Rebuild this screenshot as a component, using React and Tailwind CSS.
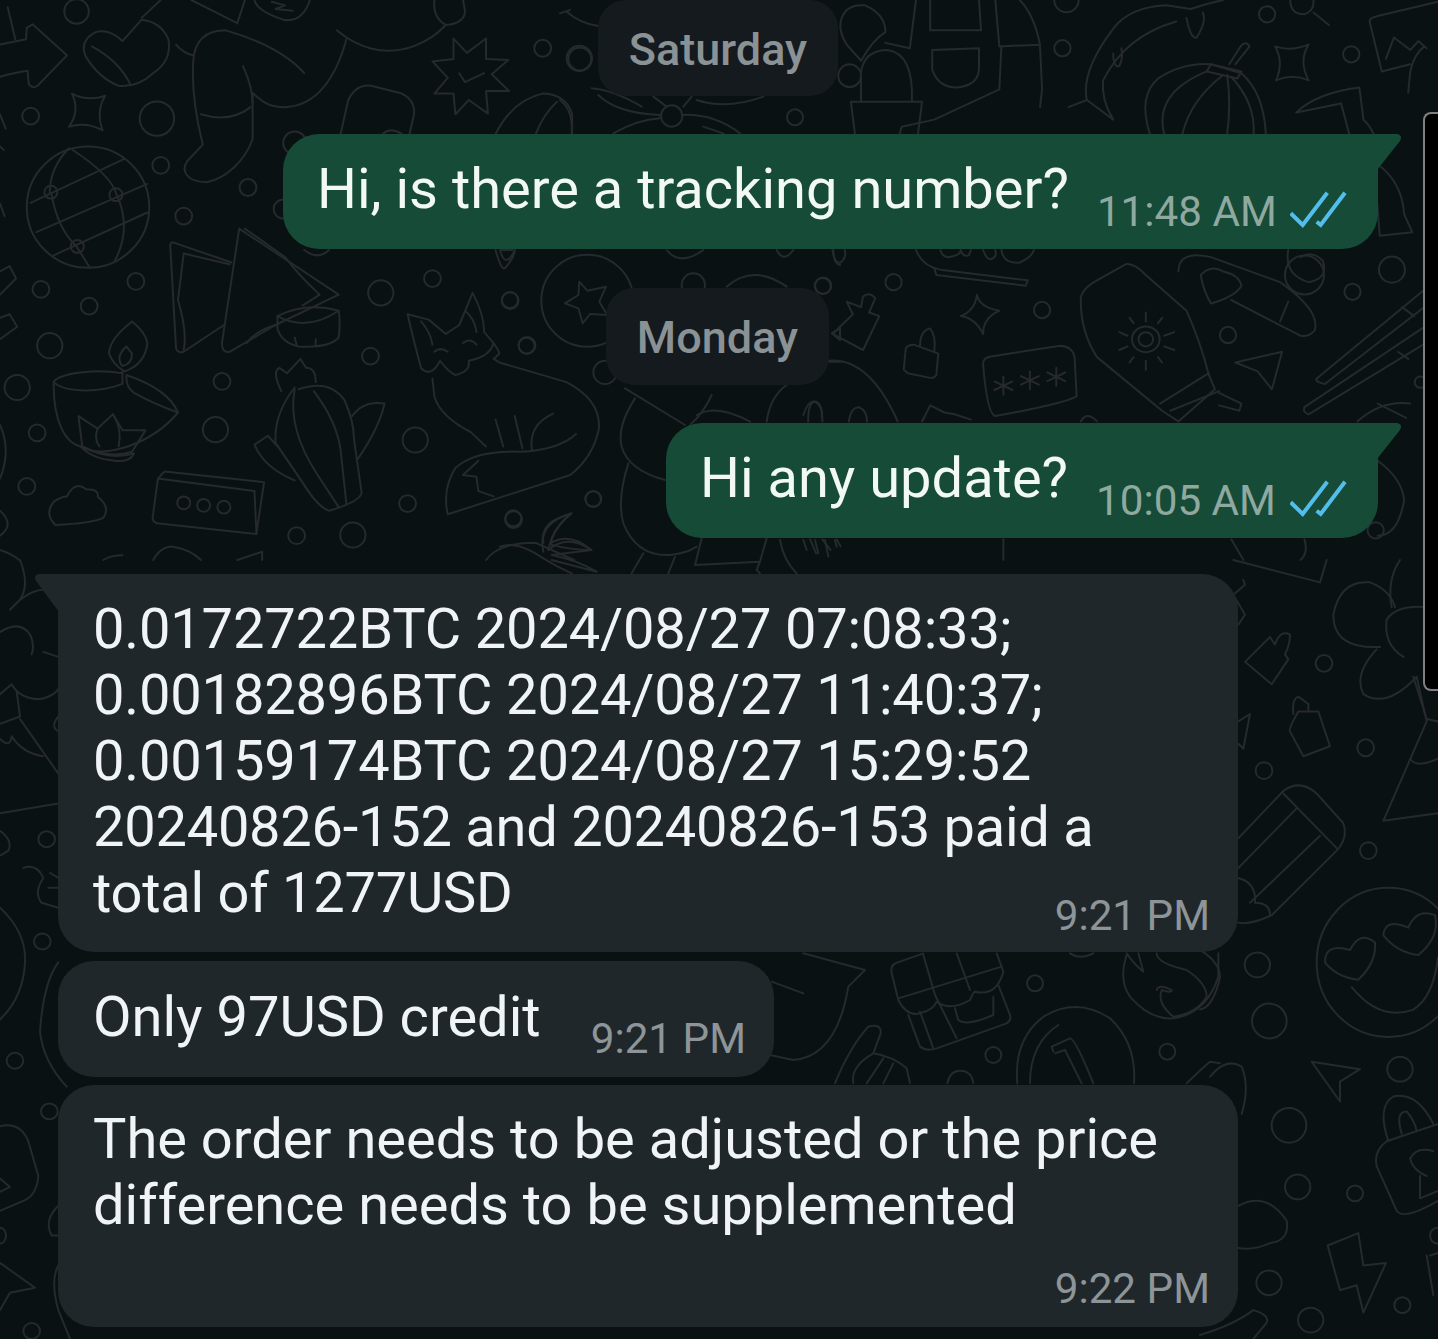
import React from "react";

const E = (cx, cy, rx, ry) => `M${cx - rx} ${cy}a${rx} ${ry} 0 1 0 ${2 * rx} 0a${rx} ${ry} 0 1 0 ${-2 * rx} 0Z`;
const R = (list, rx, ry) => list.map(([x, y, r]) => E(x, y, r * rx, r * ry));

const g3 = [
  "M0 215 C30 205 60 200 72 198 L75 235 Q85 250 98 240 L175 155 L85 68 L70 78 L68 110 L0 125", "M20 20 L40 110",
  "M320 115 L370 55 Q420 60 440 110 Q450 170 400 205 Q360 245 310 240 Q260 220 225 160 Q205 115 250 90 Q285 80 320 115", "M240 130 Q310 170 340 235",
  "M905 110 C880 210 830 300 740 300 C700 300 680 280 660 260 L660 390 C640 450 590 500 540 510 C490 510 470 480 490 450 L530 405 C510 320 500 250 505 170 C510 100 550 85 590 85 C670 110 750 150 795 205",
  "M635 185 C650 220 660 260 660 290", "M525 320 Q600 345 655 300",
  "M880 85 C930 130 1000 160 1080 130 Q1130 110 1165 70 Q1215 65 1215 30 L1210 0", "M1135 0 Q1130 50 1165 70",
  "M460 125 Q480 150 505 155", "M370 50 L420 0", "M500 0 L620 65 L640 0", "M665 0 Q670 30 740 55 Q790 65 810 0", "M710 5 L745 15 L720 25 L765 30",
  "M1185 108 L1220 148 L1270 108 L1270 165 L1328 168 L1285 208 L1330 255 L1270 255 L1275 318 L1225 280 L1190 320 L1185 262 L1135 262 L1170 218 L1130 172 L1185 165 Z", "M1200 205 L1215 230 L1265 205",
  "M188 262 Q230 285 275 268 Q250 310 268 365 Q225 340 180 355 Q210 310 188 262 Z",
  "M890 375 L910 280 Q930 235 970 240 L1050 262 Q1085 280 1082 320 L1070 375", "M1000 375 Q1020 355 1050 375", "M1295 375 Q1340 280 1420 262 Q1480 265 1495 320 L1495 375", "M1400 375 Q1420 320 1455 285",
  E(230, 580, 160, 170), "M80 568 L325 445", "M95 650 L385 515", "M140 715 L385 595", "M130 540 Q130 470 180 415", "M190 420 Q290 490 305 545 Q345 640 300 730", "M135 545 Q150 640 200 690 L235 750",
  E(133, 538, 17, 18), E(303, 545, 17, 18), E(202, 690, 17, 18),
  "M625 640 L580 960 Q580 990 600 985 L720 910 L885 825 L625 640 Z", "M605 735 L450 678 Q445 680 445 690 L460 975 Q465 990 480 985 L585 910", "M480 710 L465 840 Q490 930 480 980", "M480 710 L600 740", "M640 640 L745 720 Q780 770 835 825 Q800 850 790 855",
  "M725 885 Q800 845 885 870 Q890 905 885 945 Q860 975 780 970 Q735 960 725 920 Z", "M725 885 Q800 930 885 870", "M720 910 Q670 925 645 960", "M770 945 L775 965 M825 950 L825 968",
  "M345 900 Q285 950 285 990 Q295 1020 325 1040 Q380 1020 385 960 Q380 930 345 900 Z", "M330 970 Q300 1000 320 1025 Q345 1020 345 990 Z", "M320 1040 L320 1075 C260 1100 170 1100 140 1070 C150 1050 230 1030 320 1045", "M140 1075 C140 1180 170 1240 210 1250 C270 1290 400 1240 465 1155 Q400 1130 350 1100 Q330 1085 330 1055", "M330 1050 Q440 1090 465 1155",
  "M205 1165 L255 1200 L295 1160 L320 1205 L380 1205 L345 1265 Q280 1285 215 1250 Z", "M255 1200 Q245 1230 260 1250", "M295 1160 Q320 1200 310 1250", "M215 1250 Q280 1290 350 1270 Q340 1295 300 1290 Q240 1285 210 1250",
  "M145 1470 Q115 1440 140 1405 Q160 1390 175 1390 Q195 1345 225 1370 Q260 1370 255 1390 Q290 1420 270 1450 Q240 1465 145 1470",
  "M430 1320 L690 1350 L670 1495 L410 1465 Q395 1460 400 1440 L412 1345 Q415 1335 430 1320", "M412 1340 L665 1375 L670 1495", E(480, 1408, 17, 18), E(532, 1415, 17, 18), E(585, 1420, 17, 18),
  "M780 1090 Q860 1060 900 1120 Q925 1180 925 1230 L945 1380 Q940 1405 860 1430 Q830 1420 790 1350 L720 1240 Q715 1160 770 1085", "M770 1090 Q750 1200 830 1330 L885 1420", "M820 1095 Q880 1180 890 1260 L905 1410", "M920 1165 Q950 1120 1005 1130 Q990 1200 935 1285", "M770 1345 Q690 1310 665 1245 L700 1220 L725 1250", "M735 1095 Q710 1040 730 1030 L750 1045 L785 1005 L800 1030 Q825 1030 825 1070",
  "M1130 1060 L1135 1110 Q1150 1165 1230 1210 L1270 1250", "M1100 1030 Q1080 950 1065 880 L1120 895 L1165 935 L1200 910 L1235 820 Q1265 880 1265 930 Q1300 970 1305 990 L1290 1005 L1305 1015 L1480 1070 Q1570 1120 1565 1200 Q1550 1280 1490 1330 L1170 1440 Q1155 1370 1190 1310 Q1240 1260 1360 1265 Q1460 1260 1505 1215",
  "M1295 1175 L1315 1250", "M1345 1165 L1365 1255", "M1445 1158 Q1380 1190 1390 1260", "M1100 1030 Q1125 1060 1150 1010 Q1170 1040 1190 1050 Q1230 1040 1225 1010 Q1280 1000 1290 960", "M1250 1290 L1210 1330 L1245 1335 L1250 1375 L1290 1390",
  "M1135 985 Q1150 970 1170 985", "M1210 960 Q1230 945 1245 965", "M1100 900 Q1125 930 1130 965", "M1215 870 Q1240 890 1245 930",
  "M1270 1568 Q1300 1520 1400 1520 L1500 1568", "M1420 1520 Q1410 1460 1490 1440 Q1440 1490 1440 1520 Q1490 1490 1545 1540 Q1490 1540 1440 1525", "M400 1568 Q420 1530 450 1530 Q500 1540 525 1568", "M620 1568 L685 1545 L685 1568", "M270 1568 Q290 1555 320 1555",
  "M0 760 L25 745 L42 780 L0 825", "M0 890 L25 880 L45 915 L0 950", "M0 1190 Q30 1260 0 1340", "M0 1430 Q40 1470 0 1500", "M0 1540 Q30 1550 50 1568", "M0 320 L15 360 M0 410 L10 420 M0 570 L12 605",
  "M1295 700 Q1310 760 1320 750 Q1345 720 1345 700", "M795 700 Q830 730 860 700", "M1310 700 L1340 700",
  ...R([[1418, 135, 22], [1515, 165, 30], [80, 325, 22], [410, 332, 45], [420, 463, 22], [648, 525, 22], [480, 605, 22], [107, 810, 22], [355, 788, 22], [233, 857, 22], [130, 968, 33], [45, 1085, 33], [580, 1068, 22], [97, 1212, 22], [563, 1203, 33], [70, 1362, 22], [995, 820, 33], [1130, 780, 22], [1333, 842, 22], [968, 997, 22], [1377, 967, 22], [1085, 1232, 33], [1065, 1410, 22], [775, 1500, 22], [922, 1498, 33], [1342, 1455, 22], [1550, 1397, 20], [770, 400, 30], [740, 585, 25], [200, 32, 32]], 1, 1.07),
];

const g4 = [
  "M125 285 L300 285 L290 375", "M125 285 L135 375", "M150 285 L150 200 Q160 140 215 140 Q280 150 275 285", "M100 60 Q110 10 160 15 Q210 40 210 90 Q180 110 150 170 L115 125 Q95 90 100 60",
  "M285 0 L270 135 L210 120", "M480 0 L490 130 L590 125 Q575 40 540 0", "M320 0 L320 85 L445 85 L440 0", "M325 140 L325 195 Q340 245 385 245 Q440 240 440 190 L440 135 Z", "M495 130 L490 250 L330 335 L250 355 L245 375", "M590 130 L595 250 L590 300",
  "M660 300 L705 280 L770 335 Q740 280 745 225 Q800 100 925 60", "M705 280 Q690 200 770 80 Q810 20 900 15 L960 25 Q1000 10 1040 0", "M950 50 Q960 110 975 105 Q1000 60 990 35", "M770 150 Q770 190 785 185 Q795 160 790 135",
  "M860 375 Q830 270 880 220 Q940 175 1010 180 L1085 205 Q1140 260 1145 375", "M1010 180 L1085 200 L1075 220 L1000 200 Z", "M1055 180 L1080 135 Q1095 110 1105 130 L1070 180", "M895 375 Q870 260 1000 200", "M940 375 Q960 280 1040 210", "M1050 210 Q1060 290 1050 375", "M1060 215 Q1120 290 1115 375",
  "M1168 130 Q1205 145 1250 125 Q1225 170 1250 225 Q1210 205 1170 225 Q1190 175 1168 130 Z", "M1205 0 Q1205 40 1240 40 Q1265 30 1262 0", "M1262 35 L1300 70",
  "M1400 60 Q1400 50 1420 45 L1568 5", "M1400 60 L1430 200 L1500 180", "M1440 165 L1460 105 L1500 140 L1520 115 L1540 135", "M1220 315 Q1270 260 1375 245 L1385 335 Q1400 350 1410 375", "M1220 315 L1330 290 L1350 375", "M1495 260 L1500 200 Q1510 150 1535 130",
  "M80 700 Q85 740 100 735 Q115 720 110 700", "M285 700 Q300 745 345 755 L560 785 L555 800 L335 770 L330 750", "M345 700 Q350 720 365 720 Q395 715 395 700 Q400 720 415 715 Q420 700 420 700", "M450 700 Q460 730 470 725 Q485 720 480 700", "M495 700 Q500 740 540 735 Q570 720 575 700",
  "M115 845 L150 860 L155 830 Q170 815 185 835 L170 875 L195 885 L155 980 L80 935 L130 880 Z", "M435 825 Q440 860 490 870 Q450 890 450 935 Q430 890 395 885 Q430 870 435 825 Z",
  "M255 1035 L260 975 Q265 965 280 965 L340 990 L335 1050 Q330 1060 320 1058 L265 1045 Z", "M295 970 Q295 925 320 920 Q335 940 330 985",
  "M450 1020 Q450 1000 470 998 L640 968 Q670 970 675 1000 L680 1110 Q650 1130 480 1165 Q460 1160 450 1020",
  "M500 1055 L500 1105 M478 1068 L522 1092 M478 1092 L522 1068", "M565 1040 L565 1090 M543 1053 L587 1077 M543 1077 L587 1053", "M630 1030 L630 1080 M608 1043 L652 1067 M608 1067 L652 1043",
  "M690 840 Q690 810 730 785 L800 740 Q820 735 850 770 L950 870 Q985 960 1005 1050 L1020 1090 L930 1180 L890 1150 L730 1000 Q690 930 690 840", "M885 1130 L1005 1045", "M910 1150 L1030 1095", "M1030 1100 L1085 1130 L1080 1150 L1030 1135",
  E(850, 950, 34, 36), E(850, 950, 18, 20), "M850 875 L850 900 M850 1010 L850 1035 M785 930 L805 940 M895 940 L920 930 M785 980 L805 970 M895 970 L920 980 M810 890 L820 905 M880 905 L890 890 M810 1015 L820 1000 M880 1000 L890 1015",
  "M1070 1015 L1185 985 L1160 1090 L1125 1040 Z", "M930 760 Q930 700 1010 720 L1180 790 Q1280 870 1265 925 Q1250 945 1230 940 L1060 840", "M985 770 Q1010 740 1040 760 Q1080 770 1085 800 Q1070 830 1010 850 Q990 810 985 770Z", "M1200 700 Q1190 770 1250 790 Q1300 780 1285 730 Q1260 700 1230 720", "M1180 900 L1200 845",
  "M1270 1060 L1568 780", "M1290 1075 L1568 830", "M1240 1140 L1568 890", "M1250 1160 L1568 940", "M1270 1060 Q1265 1070 1290 1075", "M1240 1140 Q1235 1155 1250 1160", "M1480 860 L1510 885", "M1470 985 L1495 1005",
  "M1370 1180 Q1430 1120 1500 1130", "M300 1180 L320 1135 L355 1155 L380 1160 L420 1175", "M70 1010 Q170 1000 240 1180", "M20 1180 Q20 1120 40 1125 Q55 1130 55 1180", "M120 1180 Q125 1140 145 1140 Q165 1150 165 1180", "M690 1180 Q705 1150 730 1180",
  "M25 1510 L40 1550 M55 1510 L75 1540 M90 1510 L100 1530", "M1420 460 Q1480 510 1485 600 L1505 650 L1425 660 L1415 510", "M1420 1290 Q1480 1340 1485 1400 Q1470 1500 1420 1500", "M1420 1130 L1490 1170", "M1060 1510 L1090 1568", "M1240 1510 Q1250 1550 1230 1568", "M500 1510 L500 1568",
  ...R([[645, 135, 20], [1148, 40, 20], [1355, 152, 20], [122, 212, 28], [57, 800, 20], [230, 790, 20], [595, 868, 20], [1052, 938, 20], [1358, 817, 20], [1455, 755, 32], [1240, 770, 48], [1415, 1485, 20], [1525, 1070, 14], [655, 0, 30]], 1, 1.14),
];

const g8 = [
  E(262, 182, 138, 138), "M238 125 L262 152 L318 140 L298 185 L322 225 L270 222 L248 250 L235 205 L195 190 L235 165 Z",
  ...R([[30, 180, 24], [80, 317, 24], [315, 397, 35], [968, 138, 24], [280, 777, 24], [40, 835, 24], [580, 135, 35]], 1, 1),
  "M680 140 Q760 70 860 140", "M500 30 Q540 80 610 30", "M830 30 Q850 70 880 30", "M0 30 Q15 90 45 30", "M1000 30 Q1000 70 1020 75",
  "M375 445 L555 555", "M405 475 Q350 560 365 620 Q385 690 495 720", "M385 670 Q350 780 370 850 Q410 950 510 945 Q560 940 590 920", "M605 895 L585 975 L780 965 L770 990 L780 1000", "M800 895 L780 965", "M635 465 Q610 520 570 555", "M590 525 Q650 490 750 545", "M800 545 Q810 470 860 435", "M910 525 Q925 480 945 485 Q970 500 965 530", "M985 365 L1020 365", "M995 280 L1020 265 L1020 300Z",
  "M0 920 Q50 900 130 955 Q170 980 215 1000", "M130 935 Q110 850 215 820 Q160 860 145 930", "M145 930 Q200 880 275 930 L155 945 Q230 960 290 995 L155 960", "M430 940 L395 1000", "M525 950 L505 1000", "M910 900 L920 930 M945 900 L955 940 M975 900 L985 950 M1005 900 L1010 920", "M840 900 Q850 960 890 1000",
];

const g9 = [
  E(58, 175, 38, 38), "M0 40 L30 30", "M20 35 Q60 70 115 78", "M0 300 Q40 330 35 400", E(705, 352, 24, 24), E(335, 348, 32, 32), "M95 265 Q160 270 245 320", "M115 285 Q170 340 300 345", "M160 400 Q230 360 300 355", "M370 320 L395 290", "M410 300 Q500 330 610 290", "M365 345 Q460 340 540 400", "M430 380 L490 400", "M280 290 L320 320",
];

const g5 = [
  "M575 95 Q560 40 600 0", "M540 175 Q400 180 400 110 Q420 40 510 45 Q570 60 585 95", "M610 195 Q550 170 560 120 Q590 90 680 95", "M530 180 Q460 230 490 270 Q560 300 650 235 L680 325 L550 525 L714 510", "M640 235 L680 320 L714 325", "M630 400 Q650 420 714 400",
  "M135 205 L210 155 L225 170 Q240 140 270 150 Q270 170 255 190 L265 200 L215 250 Z",
  E(372, 208, 25, 17), E(497, 378, 25, 17), E(192, 424, 25, 17), E(505, 585, 25, 17), E(172, 815, 38, 25), E(208, 928, 52, 35), E(600, 1025, 38, 25), E(267, 1138, 52, 35), E(293, 1262, 38, 25), E(465, 1275, 24, 16), E(207, 1455, 38, 25), E(607, 1500, 24, 16), E(332, 1530, 38, 25),
  "M295 305 Q265 340 270 345 L310 395 L390 375 L355 305 Z", "M280 310 Q275 280 295 275 L325 290 L325 305", "M115 325 L150 310 L130 380 L115 370",
  "M115 560 L250 465 Q300 440 350 470 L430 530 Q445 560 410 585 L215 715 Q150 735 115 730", "M115 620 L290 500", "M250 470 L410 580", "M150 690 L360 555", "M115 640 Q170 650 165 690 Q210 690 210 715",
  E(565, 810, 215, 150), "M450 785 Q480 745 525 770 Q530 810 475 845 Q410 840 375 810 Q375 770 450 785 Z", "M625 740 Q650 700 705 715 Q720 760 655 795 Q590 790 550 755 Q555 720 625 740Z", "M455 860 Q540 930 640 905 Q700 880 714 800",
  "M335 1010 L480 1025 L420 1050 L420 1090 Z",
  "M530 1220 Q520 1190 560 1170 L714 1135", "M530 1220 L590 1310 Q610 1330 714 1290", "M565 1170 Q530 1100 580 1080 Q650 1070 700 1135", "M605 1155 Q585 1110 620 1110 Q645 1130 650 1150", "M680 1240 Q640 1230 630 1205 Q650 1180 700 1190", "M660 1240 L660 1285 L714 1270",
  "M383 1380 L475 1355 L490 1420 L558 1415 L490 1515 L470 1460 L420 1470 Z", "M0 1560 Q100 1540 160 1510 Q210 1520 200 1535 L160 1568",
  "M30 1040 Q80 1000 125 1020 Q150 1060 125 1115", "M0 785 Q60 810 60 840 Q40 900 0 905", "M100 0 L360 45 L380 0", "M130 40 L135 50 L100 70 L135 110 L115 130", "M690 1400 L714 1395", "M680 1400 L700 1480", "M115 1300 Q200 1270 260 1330 Q270 1370 210 1375 Q160 1390 115 1385", E(712, 1360, 22, 16),
];

const g7 = [
  "M60 0 Q90 50 60 80 L30 100", "M60 80 Q100 60 130 60", "M0 145 Q60 120 90 150 Q105 170 95 190", "M130 185 L175 195", "M0 270 L35 250 Q60 280 120 280 Q160 275 175 260", "M50 265 L60 315 L0 330", "M60 320 L175 430", "M0 360 Q30 380 35 355 Q70 390 130 395", "M0 510 L175 490", "M0 545 Q40 565 25 585 L0 595", E(140, 562, 25, 16),
  "M70 620 Q110 610 130 640 Q100 670 125 690 L175 700", "M150 630 L175 640", "M145 660 L175 660", E(127, 768, 25, 16), "M0 700 Q80 750 75 810 Q70 880 0 925", "M175 810 Q130 850 120 950 Q130 1010 200 1060", E(45, 1008, 25, 16), E(148, 1110, 25, 16),
  "M0 1140 Q60 1130 85 1170 L115 1240 Q110 1280 70 1290 L0 1310", "M0 1245 L30 1262 L0 1272", E(0, 1360, 18, 16), "M0 1415 L105 1465 L30 1475 L0 1510", E(95, 1552, 25, 16), "M175 1300 Q130 1330 155 1360 L175 1360", "M175 1420 Q150 1450 175 1510 L210 1568", "M175 315 Q150 335 175 345",
];

const g6 = [
  "M130 40 L315 90 L265 140 Q230 350 100 360 L30 345", "M35 125 L130 160",
  "M490 40 L405 70 Q390 80 395 100 L415 180 Q440 230 480 220 Q520 210 530 185 Q570 215 630 180 Q640 155 645 155 Q710 170 730 95 L710 40", "M415 175 L725 80", "M490 45 L525 165 L590 295", "M590 40 L630 150", "M445 225 L480 320 Q500 335 530 325 L740 250 Q755 240 750 225 L715 135", "M480 215 L520 325", "M585 205 L595 240 Q620 260 700 225 L700 170",
  "M225 430 Q270 320 325 260 Q365 250 362 280 L340 340 Q400 350 440 385 L450 430", "M280 430 Q270 380 340 340", "M320 430 L370 355", "M370 430 L400 370",
  E(825, 130, 24, 24), E(700, 345, 24, 24), E(1222, 335, 24, 24), "M562 430 Q570 392 600 392 Q635 392 640 430",
  "M772 430 Q760 300 850 230 Q950 170 1050 235 Q1130 310 1122 430", "M810 430 Q810 310 895 255", "M880 335 L875 320 L930 295 Q945 295 1000 430", "M885 340 L915 330 L965 430",
  "M1100 45 Q1075 120 1110 170 Q1170 240 1240 235 Q1340 220 1375 110 L1375 40", "M1100 40 Q1120 70 1150 95 L1135 40", "M1190 40 Q1190 70 1280 90 Q1340 130 1340 170 Q1310 220 1240 230 Q1190 190 1205 150 Q1235 160 1235 150 Q1195 130 1190 150", "M930 40 Q960 60 1000 40", "M1280 430 Q1320 390 1350 365 L1380 370",
];

const Group = ({ d, tx = 0, ty = 0, sx, sy }) => (
  <g transform={`translate(${tx} ${ty}) scale(${sx} ${sy})`}>
    {d.map((p, i) => (
      <path key={i} d={p} vectorEffect="non-scaling-stroke" />
    ))}
  </g>
);

const Doodles = () => (
  <svg className="absolute inset-0 h-[1339px] w-[1438px]" viewBox="0 0 1438 1339" fill="none" stroke="#26292d" strokeWidth="2" strokeLinecap="round" strokeLinejoin="round">
    <Group d={g3} sx={1 / 2.613} sy={1 / 2.8} />
    <Group d={g4} tx={800} sx={1 / 2.458} sy={1 / 2.8} />
    <Group d={g8} tx={500} ty={240} sx={1 / 3} sy={1 / 3} />
    <Group d={g9} tx={560} sx={1 / 3} sy={1 / 3} />
    <Group d={g5} tx={1200} ty={560} sx={1 / 3} sy={1 / 2.013} />
    <Group d={g7} ty={560} sx={1 / 3} sy={1 / 2.013} />
    <Group d={g6} tx={760} ty={940} sx={1 / 3} sy={1 / 3} />
  </svg>
);

const Ticks = () => (
  <svg className="mb-[21px] ml-auto h-[38px] w-[57px] shrink-0" viewBox="0 0 57 38" fill="none" stroke="#53bdeb" strokeWidth="4">
    <path d="M0.7 23.3L12.7 35L37.3 2.7" />
    <path d="M26.7 31.7L30.7 35L55 2.7" />
  </svg>
);

const TailRight = () => (
  <svg className="absolute right-[-24px] top-0 h-[38px] w-[25px]" viewBox="0 0 25 38" fill="#164b37">
    <path d="M0 0H20Q26 1 23 7L0 36Z" />
  </svg>
);

const TailLeft = () => (
  <svg className="absolute left-[-24px] top-0 h-[40px] w-[25px]" viewBox="0 0 25 40" fill="#20272b">
    <path d="M25 0H5Q-1 1 2 7L25 38Z" />
  </svg>
);

const Day = ({ children, cls }) => (
  <div className={`flex items-center justify-center self-center rounded-[28px] bg-[#151a1e] pt-[3px] text-[45px] font-medium leading-[52px] text-[#8b9296] ${cls}`}>{children}</div>
);

const Out = ({ text, time, cls }) => (
  <div className={`relative flex h-[115px] items-end self-end rounded-bl-[36px] rounded-br-[36px] rounded-tl-[36px] bg-[#164b37] pl-[34px] pr-[31px] ${cls}`}>
    <TailRight />
    <div className="mb-[27px] whitespace-nowrap text-[56px] leading-[66px] text-[#f2f8f6]">{text}</div>
    <div className="mb-[12px] ml-[28px] whitespace-nowrap text-[42.2px] leading-[50px] text-[#8fa9a0]">{time}</div>
    <Ticks />
  </div>
);

const Time = ({ children, cls }) => (
  <div className={`whitespace-nowrap text-[42.2px] leading-[50px] text-[#8d9599] ${cls}`}>{children}</div>
);

const Line = ({ children, cls = "" }) => <div className={`whitespace-nowrap ${cls}`}>{children}</div>;

export default function App() {
  return (
    <div className="relative h-[1339px] w-[1438px] overflow-hidden bg-[#0a1112]" style={{ fontFamily: "Roboto, sans-serif" }}>
      <Doodles />
      <div className="relative flex flex-col items-start pl-[58px] pr-[60px]">
        <Day cls="h-[96px] w-[240px]">Saturday</Day>
        <Out text="Hi, is there a tracking number?" time="11:48 AM" cls="mt-[38px] w-[1095px]" />
        <Day cls="mt-[39px] mr-[1px] h-[97px] w-[223px]">Monday</Day>
        <Out text="Hi any update?" time="10:05 AM" cls="mt-[38px] w-[712px]" />

        <div className="relative mt-[36px] flex h-[378px] w-[1180px] items-end rounded-[36px] rounded-tl-none bg-[#20272b] pb-[11px] pl-[35px] pr-[28px]">
          <TailLeft />
          <div className="mb-[15px] w-0 grow text-[56px] leading-[66px] text-[#f0f4f6]">
            <Line cls="tracking-[-0.15px]">0.0172722BTC 2024/08/27 07:08:33;</Line>
            <Line cls="tracking-[-0.15px]">0.00182896BTC 2024/08/27 11:40:37;</Line>
            <Line cls="tracking-[-0.15px]">0.00159174BTC 2024/08/27 15:29:52</Line>
            <Line cls="tracking-[-0.25px]">20240826-152 and 20240826-153 paid a</Line>
            <Line cls="tracking-[-0.25px]">total of 1277USD</Line>
          </div>
          <Time>9:21 PM</Time>
        </div>

        <div className="mt-[9px] flex h-[116px] w-[716px] items-end rounded-[36px] bg-[#20272b] pb-[13px] pl-[35px] pr-[28px]">
          <div className="mb-[14px] whitespace-nowrap text-[56px] leading-[66px] text-[#f0f4f6]">Only 97USD credit</div>
          <Time cls="ml-auto">9:21 PM</Time>
        </div>

        <div className="mt-[8px] flex h-[242px] w-[1180px] flex-col rounded-[36px] bg-[#20272b] pl-[35px] pr-[28px] pt-[21px]">
          <div className="text-[56px] leading-[66px] text-[#f0f4f6]">
            <Line>The order needs to be adjusted or the price</Line>
            <Line>difference needs to be supplemented</Line>
          </div>
          <Time cls="mb-[13px] mt-auto self-end">9:22 PM</Time>
        </div>
      </div>
      <div className="absolute right-0 top-[112px] h-[579px] w-[15px] rounded-l-[8px] border-y-2 border-l-2 border-[#7d7f80] bg-black" />
    </div>
  );
}
